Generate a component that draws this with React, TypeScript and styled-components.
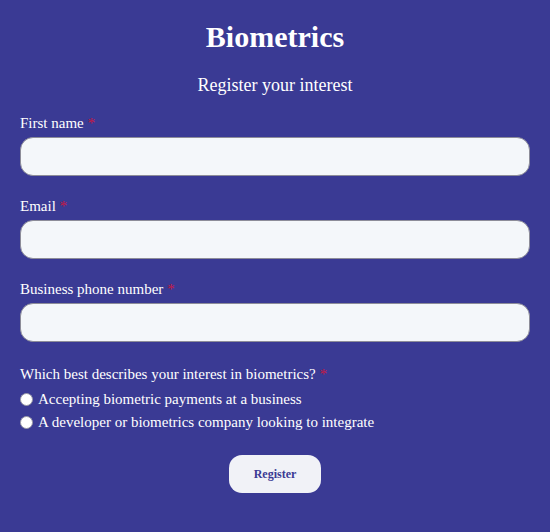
import styled, { createGlobalStyle } from "styled-components";

const GlobalStyle = createGlobalStyle`
  html, body {
    margin: 0;
    padding: 0;
    background: #3a3a94;
  }
  body {
    font-family: "Liberation Serif", "Times New Roman", serif;
    color: #ffffff;
  }
`;

const Page = styled.form`
  width: 550px;
  min-height: 532px;
  box-sizing: border-box;
  padding: 18px 20px 0 20px;
  background: #3a3a94;
  display: flex;
  flex-direction: column;
`;

const Title = styled.h1`
  margin: 0;
  font-size: 30px;
  line-height: 38px;
  font-weight: bold;
  text-align: center;
`;

const Subtitle = styled.h2`
  margin: 18px 0 18px 0;
  font-size: 18px;
  line-height: 22px;
  font-weight: normal;
  text-align: center;
`;

const Field = styled.div`
  display: flex;
  flex-direction: column;
  margin-bottom: 21px;
`;

const Label = styled.label`
  font-size: 15px;
  line-height: 18px;
  margin-bottom: 5px;
`;

const Required = styled.span`
  color: #c8173f;
  margin-left: 4px;
`;

const TextInput = styled.input`
  box-sizing: border-box;
  width: 100%;
  height: 39px;
  border: 1px solid #8d8d99;
  border-radius: 13px;
  background: #f4f7fa;
  padding: 0 12px;
  font-family: inherit;
  font-size: 15px;
  outline: none;
`;

const Question = styled.div`
  margin-top: 2px;
`;

const Options = styled.div`
  display: flex;
  flex-direction: column;
  margin-top: 5px;
`;

const Option = styled.label`
  display: flex;
  align-items: center;
  height: 23px;
  font-size: 15px;
  gap: 5px;
`;

const Radio = styled.input`
  appearance: none;
  margin: 0;
  width: 13px;
  height: 13px;
  border-radius: 50%;
  background: #ffffff;
  border: 1px solid #9a9aa6;
  box-sizing: border-box;
`;

const ButtonRow = styled.div`
  display: flex;
  justify-content: center;
  margin-top: 21px;
`;

const Button = styled.button`
  width: 92px;
  height: 38px;
  border: none;
  border-radius: 13px;
  background: #f1f2f7;
  color: #3a3a94;
  font-family: "Liberation Serif", "Times New Roman", serif;
  font-weight: bold;
  font-size: 12px;
  cursor: pointer;
`;

export default function App() {
  return (
    <>
      <GlobalStyle />
      <Page onSubmit={(e) => e.preventDefault()}>
        <Title>Biometrics</Title>
        <Subtitle>Register your interest</Subtitle>
        <Field>
          <Label>
            First name<Required>*</Required>
          </Label>
          <TextInput type="text" />
        </Field>
        <Field>
          <Label>
            Email<Required>*</Required>
          </Label>
          <TextInput type="email" />
        </Field>
        <Field>
          <Label>
            Business phone number<Required>*</Required>
          </Label>
          <TextInput type="tel" />
        </Field>
        <Question>
          <Label as="div">
            Which best describes your interest in biometrics?<Required>*</Required>
          </Label>
          <Options>
            <Option>
              <Radio type="radio" name="interest" />
              Accepting biometric payments at a business
            </Option>
            <Option>
              <Radio type="radio" name="interest" />
              A developer or biometrics company looking to integrate
            </Option>
          </Options>
        </Question>
        <ButtonRow>
          <Button type="submit">Register</Button>
        </ButtonRow>
      </Page>
    </>
  );
}
